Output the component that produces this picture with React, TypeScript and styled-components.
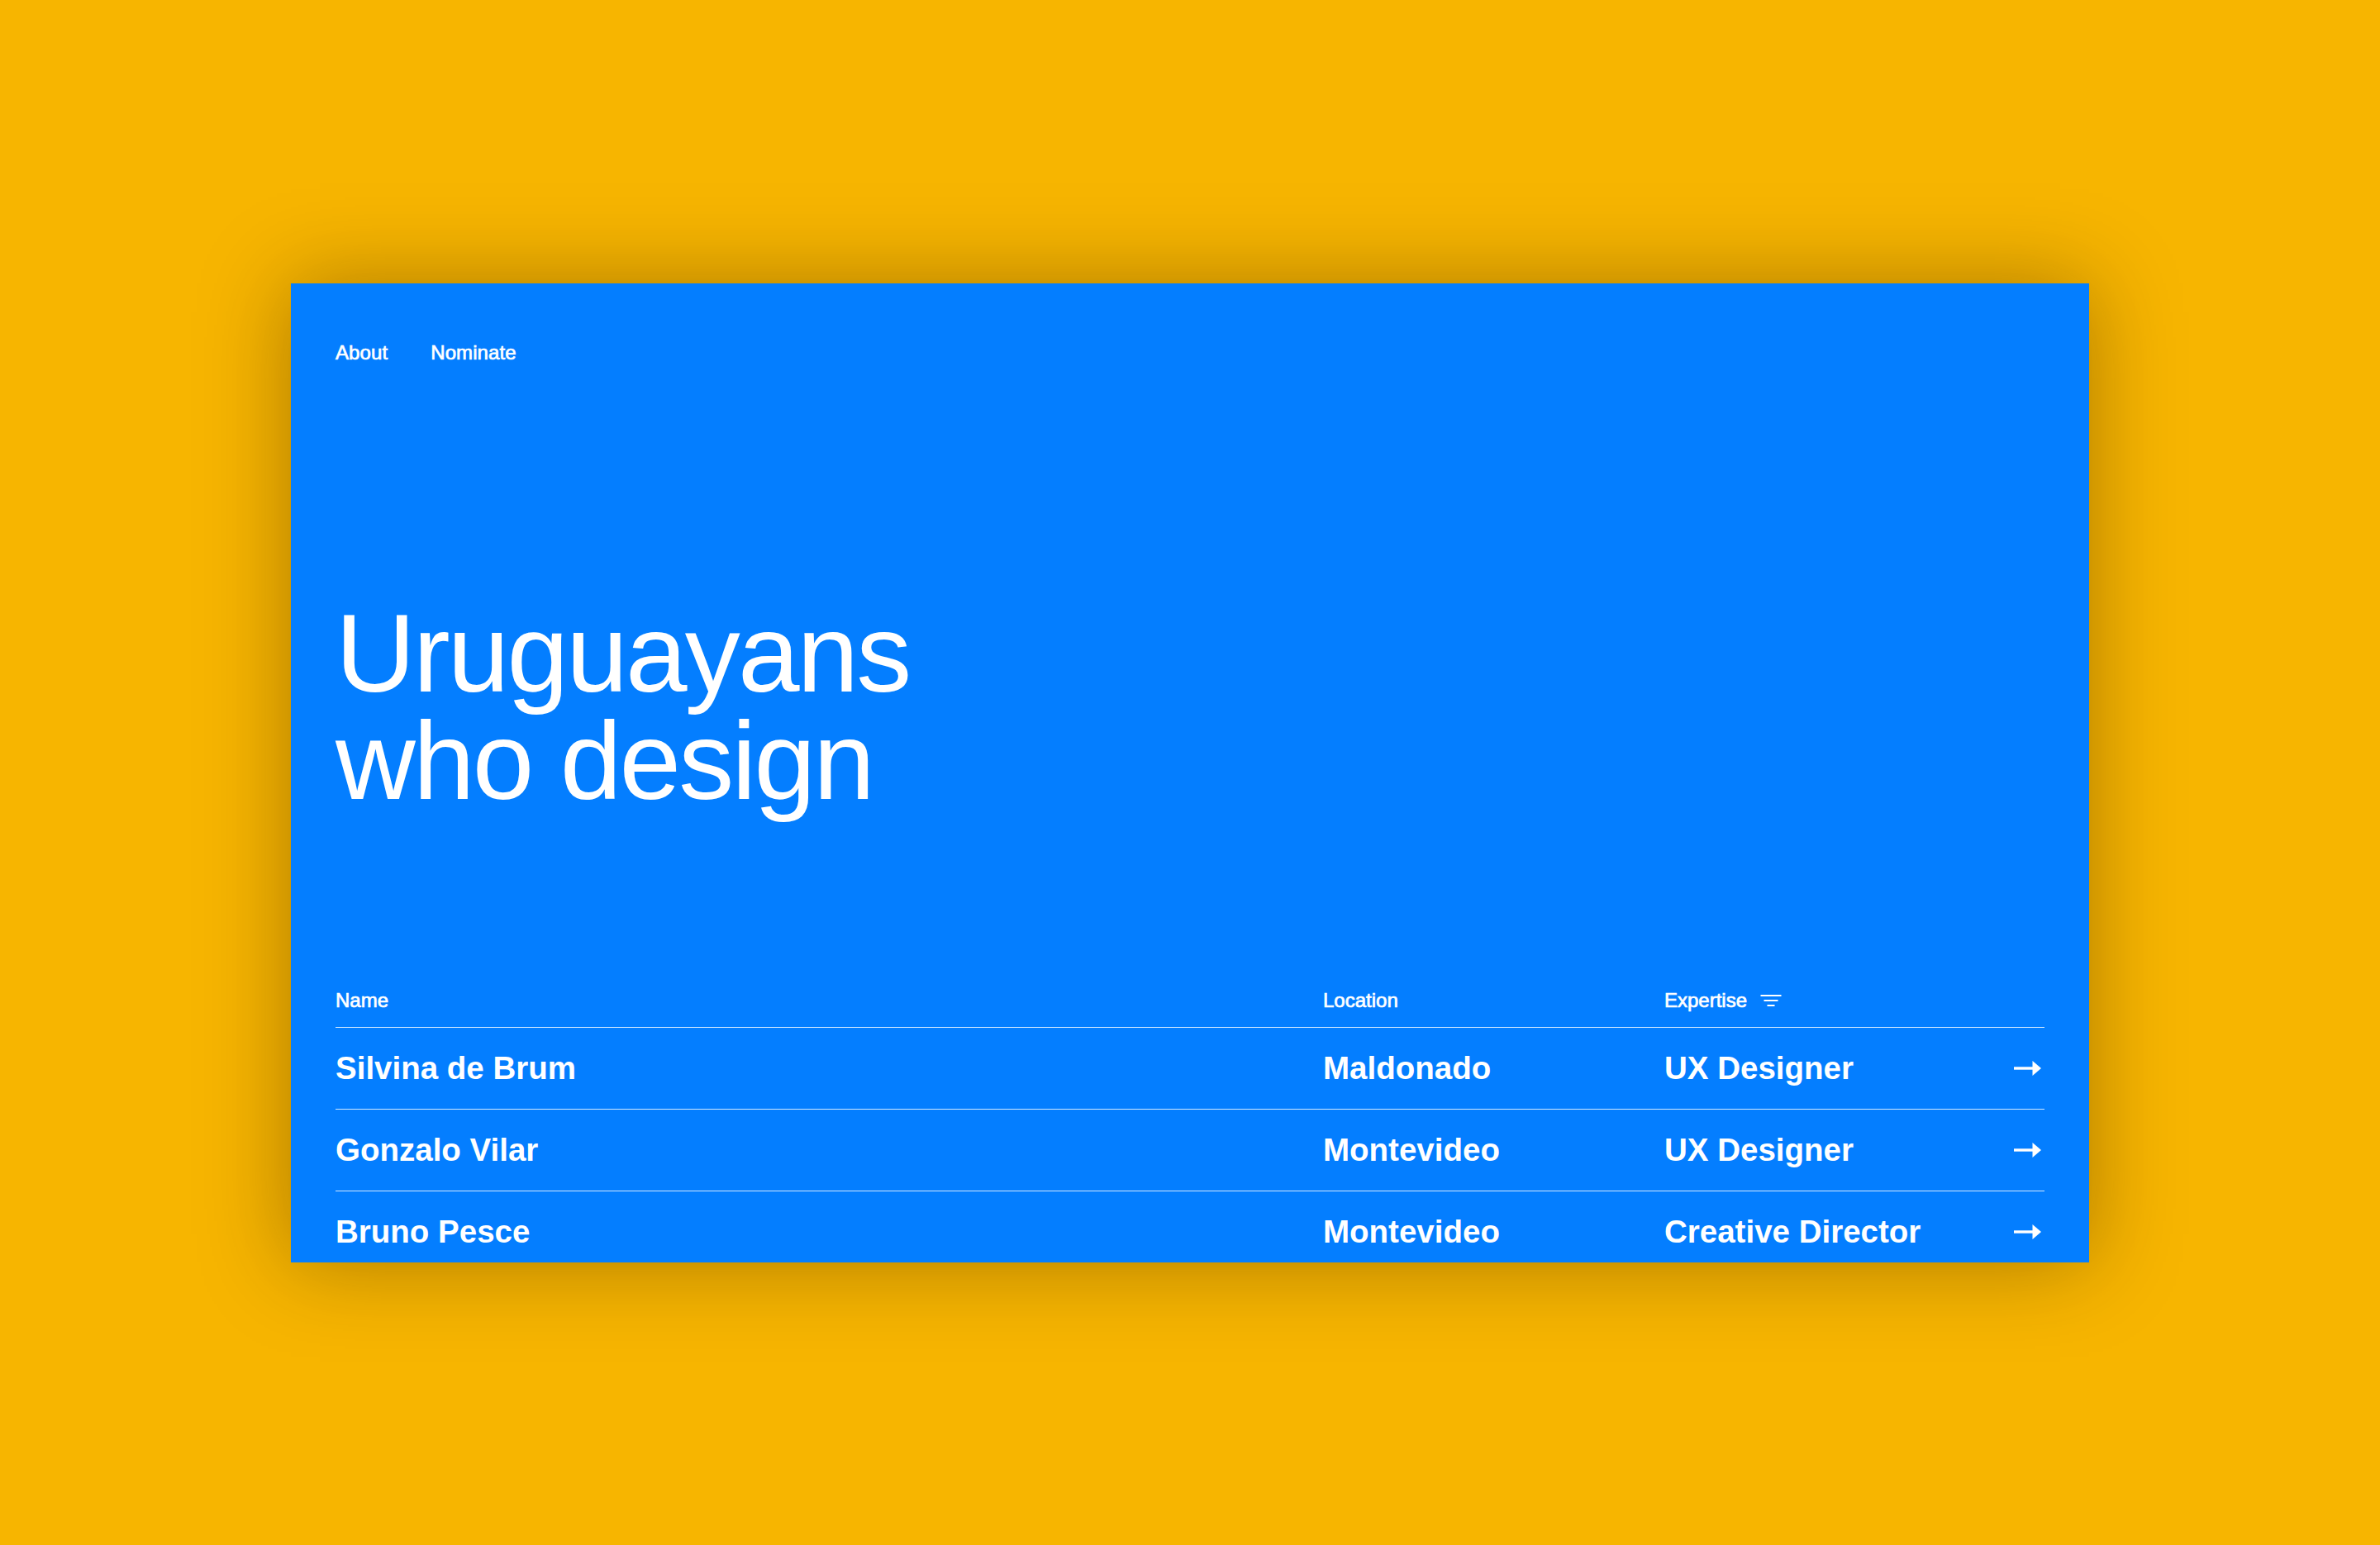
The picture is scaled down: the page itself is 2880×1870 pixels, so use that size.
import React from "react";
import styled, { createGlobalStyle } from "styled-components";

const GlobalStyle = createGlobalStyle`
  html, body {
    margin: 0;
    padding: 0;
    background: #f7b500;
  }
  #root {
    min-height: 100vh;
    display: flex;
    align-items: center;
    justify-content: center;
  }
`;

const Page = styled.div`
  width: 100%;
  min-height: 100vh;
  display: flex;
  align-items: center;
  justify-content: center;
  background: #f7b500;
  font-family: "Liberation Sans", Arial, Helvetica, sans-serif;
`;

const Card = styled.main`
  width: 2176px;
  height: 1185px;
  box-sizing: border-box;
  padding: 72px 54px 0 54px;
  background: #047eff;
  color: #ffffff;
  overflow: hidden;
  box-shadow: 0 0 100px rgba(40, 20, 0, 0.36);
  display: flex;
  flex-direction: column;
`;

const Nav = styled.nav`
  display: flex;
  gap: 52px;
`;

const NavLink = styled.a`
  font-size: 24px;
  line-height: 24px;
  font-weight: 400;
  -webkit-text-stroke: 0.7px #ffffff;
  letter-spacing: 0.1px;
  color: #ffffff;
  text-decoration: none;
  cursor: pointer;
`;

const Title = styled.h1`
  margin: 287px 0 0 0;
  font-size: 134px;
  line-height: 130px;
  font-weight: 400;
  letter-spacing: -2.8px;
`;

const Table = styled.section`
  margin-top: 213px;
  display: flex;
  flex-direction: column;
`;

const Row = styled.div<{ $head?: boolean }>`
  display: grid;
  grid-template-columns: 1195px 413px 1fr auto;
  align-items: center;
  border-bottom: 1px solid rgba(255, 255, 255, 0.82);
  padding: ${(p) => (p.$head ? "0 0 20px 0" : "30px 0 30px 0")};
`;

const HeadCell = styled.div`
  display: flex;
  align-items: center;
  gap: 16px;
  font-size: 24px;
  line-height: 24px;
  font-weight: 400;
  -webkit-text-stroke: 0.7px #ffffff;
`;

const Cell = styled.div`
  font-size: 38.5px;
  line-height: 38px;
  font-weight: 700;
  letter-spacing: 0;
`;

const ArrowCell = styled.div`
  display: flex;
  align-items: center;
  justify-content: flex-end;
  padding-right: 4px;
`;

const FilterIcon = () => (
  <svg width="26" height="16" viewBox="0 0 26 16" aria-hidden="true">
    <rect x="0.5" y="1" width="25" height="2" fill="#fff" />
    <rect x="4.5" y="7" width="17" height="2" fill="#fff" />
    <rect x="8.5" y="13" width="9" height="2" fill="#fff" />
  </svg>
);

const Arrow = () => (
  <svg width="33" height="18" viewBox="0 0 33 18" aria-hidden="true">
    <rect x="0" y="7.3" width="24" height="3.4" fill="#fff" />
    <polygon points="22.5,0 33,9 22.5,18" fill="#fff" />
  </svg>
);

const people = [
  { name: "Silvina de Brum", location: "Maldonado", expertise: "UX Designer" },
  { name: "Gonzalo Vilar", location: "Montevideo", expertise: "UX Designer" },
  { name: "Bruno Pesce", location: "Montevideo", expertise: "Creative Director" },
];

export default function App() {
  return (
    <>
      <GlobalStyle />
      <Page>
        <Card>
          <Nav>
            <NavLink>About</NavLink>
            <NavLink>Nominate</NavLink>
          </Nav>
          <Title>
            Uruguayans
            <br />
            who design
          </Title>
          <Table>
            <Row $head>
              <HeadCell>Name</HeadCell>
              <HeadCell>Location</HeadCell>
              <HeadCell>
                Expertise
                <FilterIcon />
              </HeadCell>
              <div />
            </Row>
            {people.map((p) => (
              <Row key={p.name}>
                <Cell>{p.name}</Cell>
                <Cell>{p.location}</Cell>
                <Cell>{p.expertise}</Cell>
                <ArrowCell>
                  <Arrow />
                </ArrowCell>
              </Row>
            ))}
          </Table>
        </Card>
      </Page>
    </>
  );
}
